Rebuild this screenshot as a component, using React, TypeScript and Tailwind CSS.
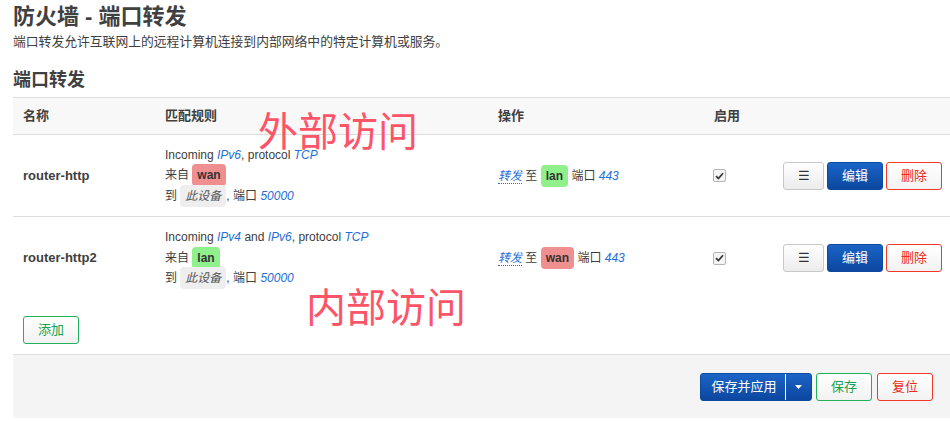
import React from 'react';

const FONT = '"Liberation Sans", "Noto Sans CJK SC", sans-serif';

function Badge({ children, tone }: { children: React.ReactNode; tone: 'wan' | 'lan' | 'dev' }) {
  const cls =
    tone === 'wan'
      ? 'bg-[#f08f8f] font-bold not-italic text-[#333]'
      : tone === 'lan'
        ? 'bg-[#90f08c] font-bold not-italic text-[#333]'
        : 'bg-[#eeeeee] italic text-[#555]';
  return <span className={`${cls} rounded-[4px] px-[5px] py-[4px]`}>{children}</span>;
}

function Blue({ children }: { children: React.ReactNode }) {
  return <span className="italic text-[#1f6fd8]">{children}</span>;
}

type Rule = {
  name: string;
  family: React.ReactNode;
  src: 'wan' | 'lan';
  dest: 'wan' | 'lan';
};

const rules: Rule[] = [
  {
    name: 'router-http',
    family: <>Incoming <Blue>IPv6</Blue>, protocol <Blue>TCP</Blue></>,
    src: 'wan',
    dest: 'lan',
  },
  {
    name: 'router-http2',
    family: <>Incoming <Blue>IPv4</Blue> and <Blue>IPv6</Blue>, protocol <Blue>TCP</Blue></>,
    src: 'lan',
    dest: 'wan',
  },
];

const COLS = 'grid grid-cols-[142px_333px_216px_70px_1fr]';

function RowButtons() {
  return (
    <div className="flex justify-end gap-[3px] pr-[8px]">
      <button className="h-[28px] w-[41px] rounded-[3px] border border-[#c8c8c8] bg-gradient-to-b from-white to-[#ececec] text-[13px] text-[#333]">
        ☰
      </button>
      <button className="h-[28px] w-[56px] rounded-[3px] border border-[#0b4a9e] bg-gradient-to-b from-[#1b64c6] to-[#0c47a0] text-[13px] text-white">
        编辑
      </button>
      <button className="h-[28px] w-[56px] rounded-[3px] border border-[#f0392b] bg-gradient-to-b from-white to-[#f2f2f2] text-[13px] text-[#ee2a1a]">
        删除
      </button>
    </div>
  );
}

export default function App() {
  return (
    <div className="relative h-[421px] w-[950px] overflow-hidden bg-white pl-[13px] text-[#404040]" style={{ fontFamily: FONT }}>
      <h1 className="pt-[1px] text-[22px] font-bold leading-[32px] text-[#404040]">防火墙 - 端口转发</h1>
      <p className="mt-[1px] text-[12.8px] leading-[16px] text-[#404040]">
        端口转发允许互联网上的远程计算机连接到内部网络中的特定计算机或服务。
      </p>
      <h2 className="mt-[18px] text-[18px] font-bold leading-[24px] text-[#404040]">端口转发</h2>

      <div className="mt-[5px]">
        <div className={`${COLS} h-[38px] items-center border-y border-[#dddddd] bg-[#f8f8f8] text-[13px] font-bold`}>
          <div className="pl-[10px]">名称</div>
          <div className="pl-[10px]">匹配规则</div>
          <div className="pl-[10px]">操作</div>
          <div className="pl-[10px]">启用</div>
          <div />
        </div>

        {rules.map((r, i) => (
          <div
            key={r.name}
            className={`${COLS} h-[82px] items-center ${i === 0 ? 'border-b border-[#dddddd]' : ''}`}
          >
            <div className="pl-[10px] text-[13px] font-bold">{r.name}</div>
            <div className="pl-[10px] text-[12px] leading-[20.5px]">
              <div>{r.family}</div>
              <div>
                来自 <Badge tone={r.src}>{r.src}</Badge>
              </div>
              <div>
                到 <Badge tone="dev">此设备</Badge>, 端口 <Blue>50000</Blue>
              </div>
            </div>
            <div className="pl-[10px] text-[12px]">
              <span className="border-b border-dotted border-[#1f6fd8] italic text-[#1f6fd8]">转发</span> 至{' '}
              <Badge tone={r.dest}>{r.dest}</Badge> 端口 <Blue>443</Blue>
            </div>
            <div className="pl-[9px]">
              <span className="flex h-[13px] w-[13px] items-center justify-center rounded-[2px] border border-[#b5b5b5] bg-[#f4f4f4]">
                <svg width="9" height="8" viewBox="0 0 9 8">
                  <path d="M1 4.2 L3.4 6.5 L8 1.3" fill="none" stroke="#333" strokeWidth="1.7" />
                </svg>
              </span>
            </div>
            <RowButtons />
          </div>
        ))}

        <div className="pb-[10px] pl-[10px] pt-[17px]">
          <button className="h-[28px] w-[56px] rounded-[3px] border border-[#1eb25a] bg-gradient-to-b from-white to-[#f2f2f2] text-[13px] text-[#13a34f]">
            添加
          </button>
        </div>

        <div className="flex h-[64px] items-center justify-end gap-[4px] rounded-bl-[4px] border-t border-[#dddddd] bg-[#f4f4f4] pr-[17px]">
          <div className="flex h-[28px] w-[112px] items-stretch overflow-hidden rounded-[3px] border border-[#0b4a9e] bg-gradient-to-b from-[#1b64c6] to-[#0c47a0] text-[13px] text-white">
            <span className="flex flex-1 items-center justify-center border-r border-white pl-[2px]">保存并应用</span>
            <span className="flex w-[25px] items-center justify-center">
              <svg width="7" height="4" viewBox="0 0 7 4">
                <path d="M0 0 H7 L3.5 4 Z" fill="#fff" />
              </svg>
            </span>
          </div>
          <button className="h-[28px] w-[56px] rounded-[3px] border border-[#1eb25a] bg-gradient-to-b from-white to-[#f2f2f2] text-[13px] text-[#13a34f]">
            保存
          </button>
          <button className="ml-[1px] h-[28px] w-[56px] rounded-[3px] border border-[#f0392b] bg-gradient-to-b from-white to-[#f2f2f2] text-[13px] text-[#ee2a1a]">
            复位
          </button>
        </div>
      </div>

      <div className="pointer-events-none absolute left-[258px] top-[112px] text-[40px] leading-[40px] text-[#fd5468]">
        外部访问
      </div>
      <div className="pointer-events-none absolute left-[306px] top-[288px] text-[40px] leading-[40px] text-[#fd5468]">
        内部访问
      </div>
    </div>
  );
}
